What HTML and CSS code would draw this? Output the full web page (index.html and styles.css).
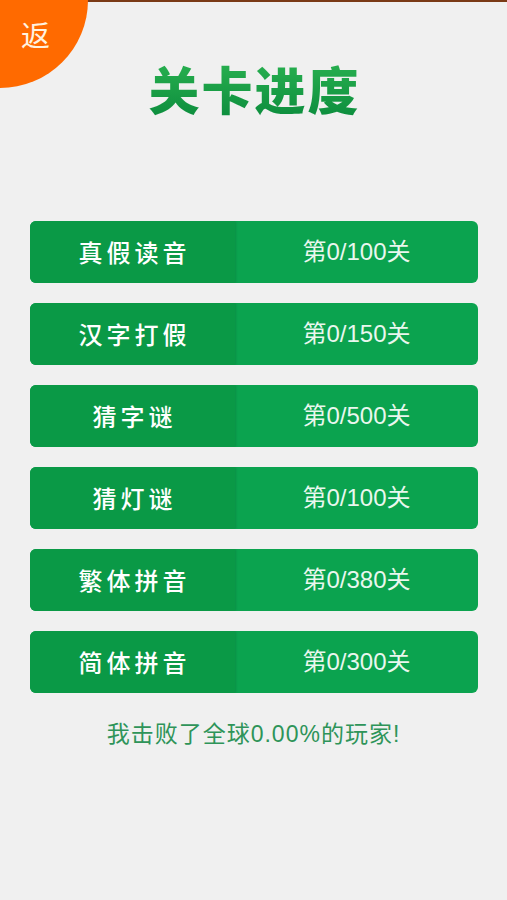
FILE: index.html
```html
<!DOCTYPE html>
<html lang="zh">
<head>
    <meta charset="UTF-8">
    <title>关卡进度</title>
    <link rel="stylesheet" href="styles.css">
</head>
<body>
<div id="page">
    <span id="back">返</span>
    <h1 class="title">关卡进度</h1>
    <ul id="levels">
        <li><span class="name">真假读音</span><span class="prog">第0/100关</span></li>
        <li><span class="name">汉字打假</span><span class="prog">第0/150关</span></li>
        <li><span class="name">猜字谜</span><span class="prog">第0/500关</span></li>
        <li><span class="name">猜灯谜</span><span class="prog">第0/100关</span></li>
        <li><span class="name">繁体拼音</span><span class="prog">第0/380关</span></li>
        <li><span class="name">简体拼音</span><span class="prog">第0/300关</span></li>
    </ul>
    <p class="beat">我击败了全球0.00%的玩家!</p>
</div>
</body>
</html>
```
FILE: styles.css
```css
*{
    margin: 0;
    padding: 0;
}
li{
    list-style: none;
}
html, body{
    height: 100%;
}
body{
    background: #f0f0f0;
    font-family: "Noto Sans CJK SC", "Liberation Sans", sans-serif;
}
#page{
    position: relative;
    height: 900px;
    border-top: 2px solid #7a3a16;
    box-sizing: border-box;
    padding-top: 51px;
}
#back{
    position: absolute;
    left: 0;
    top: -2px;
    width: 88px;
    height: 88px;
    border-bottom-right-radius: 88px;
    background: #ff6a00;
    color: #fff3e0;
    font-size: 29px;
    line-height: 29px;
    padding: 20px 0 0 21px;
    box-sizing: border-box;
}
.title{
    text-align: center;
    font-size: 51px;
    line-height: 70px;
    font-weight: 900;
    letter-spacing: 2px;
    padding-left: 2px;
    color: #15a04a;
    background: linear-gradient(#2cb552, #0a8a3c);
    -webkit-background-clip: text;
    background-clip: text;
    -webkit-text-fill-color: transparent;
}
#levels{
    margin: 98px 29px 0 30px;
    display: flex;
    flex-direction: column;
    gap: 20px;
}
#levels li{
    display: flex;
    height: 62px;
    border-radius: 6px;
    overflow: hidden;
    background: #0ba34f;
    color: #fff;
}
#levels .name{
    width: 205px;
    background: #0a9946;
    box-shadow: 1px 0 2px rgba(0,0,0,0.12);
    text-align: center;
    line-height: 62px;
    font-size: 24px;
    font-weight: 500;
    letter-spacing: 4px;
    padding-left: 4px;
    box-sizing: border-box;
}
#levels .prog{
    flex: 1;
    text-align: center;
    line-height: 62px;
    font-family: "Liberation Sans", "Noto Sans CJK SC", sans-serif;
    font-size: 24px;
    color: #e9f7ee;
}
.beat{
    margin-top: 22px;
    text-align: center;
    font-family: "Liberation Sans", "Noto Sans CJK SC", sans-serif;
    font-size: 23px;
    letter-spacing: 1px;
    color: #2e9459;
}
```
